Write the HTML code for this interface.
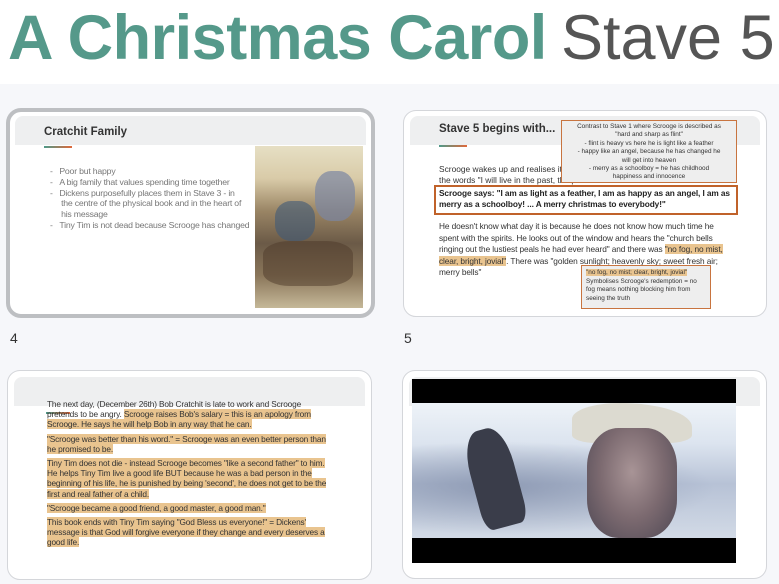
<!DOCTYPE html>
<html><head><meta charset="utf-8"><style>
*{margin:0;padding:0;box-sizing:border-box}
body{width:779px;height:584px;overflow:hidden;background:#f6f7fa;font-family:"Liberation Sans",sans-serif;position:relative}
.top{position:absolute;left:0;top:0;width:779px;height:84px;background:#fff}
.t1{position:absolute;left:8px;top:2px;font-size:63px;font-weight:bold;color:#55998a;letter-spacing:-0.5px;white-space:nowrap}
.t2{position:absolute;left:561px;top:2px;font-size:63px;color:#555;white-space:nowrap;letter-spacing:0px}
.card{position:absolute;background:#fff;border:1.5px solid #d4d6da;border-radius:13px;overflow:hidden}
.band{position:absolute;left:6px;right:6px;height:29px;background:#eeeff0;border-radius:8px 8px 0 0}
.ttl{position:absolute;font-size:11.5px;font-weight:bold;color:#333}
.ul{position:absolute;width:28px;height:2px;background:linear-gradient(90deg,#4d9a8a,#e0683a)}
.txt{position:absolute;font-size:8.4px;line-height:10px;color:#333}
.hl{background:#e9c48f}
.num{position:absolute;font-size:14px;color:#333}
</style></head><body>
<div class="top"><div class="t1">A Christmas Carol</div><div class="t2">Stave 5</div></div>

<div class="card" style="left:6px;top:108px;width:369px;height:210px;border:4px solid #bdbfc2;border-radius:15px">
 <div class="band" style="top:4px;left:5px;right:5px"></div>
 <div class="ttl" style="left:34px;top:14px">Cratchit Family</div>
 <div class="ul" style="left:34px;top:34px"></div>
 <div class="txt" style="left:40px;top:54px;color:#777;font-size:8.7px;line-height:10.8px;width:210px;letter-spacing:-0.2px">
 -&nbsp;&nbsp;&nbsp;Poor but happy<br>-&nbsp;&nbsp;&nbsp;A big family that values spending time together<br>-&nbsp;&nbsp;&nbsp;Dickens purposefully places them in Stave 3 - in<br>&nbsp;&nbsp;&nbsp;&nbsp;&nbsp;the centre of the physical book and in the heart of<br>&nbsp;&nbsp;&nbsp;&nbsp;&nbsp;his message<br>-&nbsp;&nbsp;&nbsp;Tiny Tim is not dead because Scrooge has changed</div>
 <div style="position:absolute;left:245px;top:34px;width:108px;height:162px;background:linear-gradient(180deg,#e6dfc4 0%,#d9cba8 20%,#9a8565 40%,#6b5a47 60%,#8a765a 80%,#c5b898 100%)">
  <div style="position:absolute;left:60px;top:25px;width:40px;height:50px;background:#7a86a2;border-radius:40%;opacity:.7"></div>
  <div style="position:absolute;left:20px;top:55px;width:40px;height:40px;background:#3f5a78;border-radius:40%;opacity:.6"></div>
  <div style="position:absolute;left:8px;top:95px;width:90px;height:45px;background:#4e3a2a;opacity:.5;border-radius:30%"></div>
 </div>
</div>
<div class="num" style="left:10px;top:330px">4</div>

<div class="card" style="left:403px;top:110px;width:364px;height:207px">
 <div class="band" style="top:5px"></div>
 <div class="ttl" style="left:35px;top:12px">Stave 5 begins with...</div>
 <div class="ul" style="left:35px;top:34px"></div>
 <div class="txt" style="left:35px;top:53px;width:300px;font-size:8.4px;line-height:11px">Scrooge wakes up and realises it is<br>the words "I will live in the past, the present and the future"</div>
 <div style="position:absolute;left:30px;top:74px;width:304px;height:30px;border:2.5px solid #c0622a;background:#fff"></div>
 <div class="txt" style="left:35px;top:77px;width:296px;font-size:8.3px;line-height:11px;font-weight:bold;color:#222;letter-spacing:-0.1px">Scrooge says: "I am as light as a feather, I am as happy as an angel, I am as merry as a schoolboy! ... A merry christmas to everybody!"</div>
 <div class="txt" style="left:35px;top:110px;width:292px;font-size:8.3px;line-height:11.5px;letter-spacing:-0.1px">He doesn't know what day it is because he does not know how much time he spent with the spirits. He looks out of the window and hears the "church bells ringing out the lustiest peals he had ever heard" and there was <span class="hl">"no fog, no mist, clear, bright, jovial"</span>. There was "golden sunlight; heavenly sky; sweet fresh air; merry bells"</div>
 <div style="position:absolute;left:157px;top:9px;width:176px;height:63px;background:#eeeeee;border:1.5px solid #c8743f;font-size:6.4px;line-height:8.4px;text-align:center;color:#333;padding-top:2px">Contrast to Stave 1 where Scrooge is described as<br>"hard and sharp as flint"<br>- flint is heavy vs here he is light like a feather<br>- happy like an angel, because he has changed he<br>will get into heaven<br>- merry as a schoolboy = he has childhood<br>happiness and innocence</div>
 <div style="position:absolute;left:177px;top:154px;width:130px;height:44px;background:#eeeeee;border:1.5px solid #c8743f;font-size:6.4px;line-height:8.6px;color:#333;padding:3px 4px"><span class="hl">"no fog, no mist; clear, bright, jovial"</span><br>Symbolises Scrooge's redemption = no fog means nothing blocking him from seeing the truth</div>
</div>
<div class="num" style="left:404px;top:330px">5</div>

<div class="card" style="left:7px;top:370px;width:365px;height:210px">
 <div class="band" style="top:6px"></div>
 <div class="ul" style="left:38px;top:41px;width:24px"></div>
 <div class="txt" style="left:39px;top:28px;width:286px;font-size:8.3px;line-height:10.2px;letter-spacing:-0.15px">
 <p>The next day, (December 26th) Bob Cratchit is late to work and Scrooge pretends to be angry. <span class="hl">Scrooge raises Bob's salary = this is an apology from Scrooge. He says he will help Bob in any way that he can.</span></p>
 <p style="margin-top:4px"><span class="hl">"Scrooge was better than his word." = Scrooge was an even better person than he promised to be.</span></p>
 <p style="margin-top:4px"><span class="hl">Tiny Tim does not die - instead Scrooge becomes "like a second father" to him. He helps Tiny Tim live a good life BUT because he was a bad person in the beginning of his life, he is punished by being 'second', he does not get to be the first and real father of a child.</span></p>
 <p style="margin-top:4px"><span class="hl">"Scrooge became a good friend, a good master, a good man."</span></p>
 <p style="margin-top:4px"><span class="hl">This book ends with Tiny Tim saying "God Bless us everyone!" = Dickens' message is that God will forgive everyone if they change and every deserves a good life.</span></p>
 </div>
</div>

<div class="card" style="left:402px;top:370px;width:365px;height:209px">
 <div class="band" style="top:6px"></div>
 <div style="position:absolute;left:9px;top:8px;width:324px;height:184px;background:#000">
  <div style="position:absolute;left:0;top:24px;width:324px;height:135px;overflow:hidden;background:linear-gradient(180deg,#eef3f8 0%,#dce4ef 30%,#b7c2d6 60%,#d2dae6 100%)">
   <div style="position:absolute;left:-20px;top:30px;width:360px;height:110px;background:radial-gradient(ellipse at 30% 50%,#7d8aa6 0%,transparent 60%);opacity:.7"></div>
   <div style="position:absolute;left:60px;top:25px;width:45px;height:100px;background:#3a3d4a;border-radius:40% 40% 20% 20%;transform:rotate(-15deg)"></div>
   <div style="position:absolute;left:160px;top:0px;width:120px;height:40px;background:#dcdad0;border-radius:40% 60% 20% 20%"></div>
   <div style="position:absolute;left:175px;top:25px;width:90px;height:110px;background:radial-gradient(ellipse at 50% 40%,#a89496 0%,#7c6a70 50%,#4e4854 100%);border-radius:35%"></div>
  </div>
 </div>
</div>
</body></html>
